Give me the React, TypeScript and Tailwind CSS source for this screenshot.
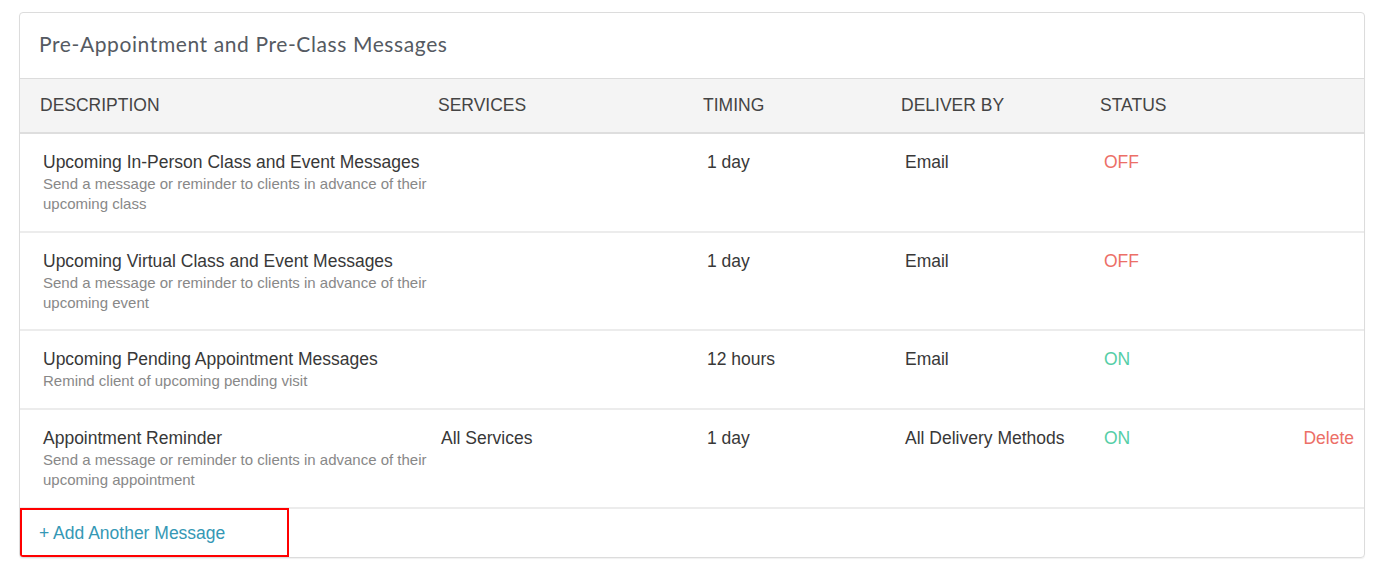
import React from "react";

type Row = {
  title: string;
  sub?: string;
  services?: string;
  timing: string;
  deliver: string;
  on: boolean;
  del?: boolean;
  h: string;
};

const rows: Row[] = [
  {
    title: "Upcoming In-Person Class and Event Messages",
    sub: "Send a message or reminder to clients in advance of their upcoming class",
    timing: "1 day",
    deliver: "Email",
    on: false,
    h: "h-[99px]",
  },
  {
    title: "Upcoming Virtual Class and Event Messages",
    sub: "Send a message or reminder to clients in advance of their upcoming event",
    timing: "1 day",
    deliver: "Email",
    on: false,
    h: "h-[98px]",
  },
  {
    title: "Upcoming Pending Appointment Messages",
    sub: "Remind client of upcoming pending visit",
    timing: "12 hours",
    deliver: "Email",
    on: true,
    h: "h-[79px]",
  },
  {
    title: "Appointment Reminder",
    sub: "Send a message or reminder to clients in advance of their upcoming appointment",
    services: "All Services",
    timing: "1 day",
    deliver: "All Delivery Methods",
    on: true,
    del: true,
    h: "h-[99px]",
  },
];

const cols = "grid grid-cols-[398px_265px_198px_199px_1fr]";

export default function App() {
  return (
    <div className="w-[1373px] h-[572px] bg-white pt-[12px] pl-[19px]" style={{ fontFamily: '"Liberation Sans", Arial, sans-serif' }}>
      <div className="w-[1346px] h-[546px] border border-[#dcdcdc] rounded-[4px] shadow-[0_1px_1px_rgba(0,0,0,0.06)] overflow-hidden flex flex-col">
        <div
          className="h-[66px] border-b border-[#dcdcdc] flex items-center pb-[3px] pl-[19px] text-[21px] text-[#555a62] tracking-[0.6px]"
          style={{ fontFamily: 'Lato, "Noto Sans", sans-serif' }}
        >
          Pre-Appointment and Pre-Class Messages
        </div>
        <div className={`${cols} h-[55px] bg-[#f4f4f4] border-b-2 border-[#dedede] items-center text-[17.5px] text-[#444] uppercase`}>
          <div className="pl-[20px]">Description</div>
          <div className="pl-[20px]">Services</div>
          <div className="pl-[20px]">Timing</div>
          <div className="pl-[20px]">Deliver By</div>
          <div className="pl-[20px]">Status</div>
        </div>
        {rows.map((r, i) => (
          <div key={i} className={`${cols} ${r.h} border-b-2 border-[#ececec] pt-[18px] text-[17.5px] text-[#383838]`}>
            <div className="pl-[23px]">
              <div className="leading-[20px] w-[400px]">{r.title}</div>
              {r.sub && <div className="mt-[2px] text-[15px] leading-[20px] text-[#888] w-[392px]">{r.sub}</div>}
            </div>
            <div className="pl-[23px] leading-[20px]">{r.services ?? ""}</div>
            <div className="pl-[24px] leading-[20px]">{r.timing}</div>
            <div className="pl-[24px] leading-[20px]">{r.deliver}</div>
            <div className="pl-[24px] pr-[10px] leading-[20px] flex justify-between">
              <span className={r.on ? "text-[#55cea6]" : "text-[#ec6f67]"}>{r.on ? "ON" : "OFF"}</span>
              {r.del && <span className="text-[#ec6f67]">Delete</span>}
            </div>
          </div>
        ))}
        <div className="flex-1 relative">
          <div className="absolute left-0 top-[-1px] w-[269px] h-[49px] border-2 border-[#ff0000]" />
          <div className="pl-[19px] pt-[14px] text-[17.5px] leading-[20px] text-[#3598b5]">+ Add Another Message</div>
        </div>
      </div>
    </div>
  );
}
